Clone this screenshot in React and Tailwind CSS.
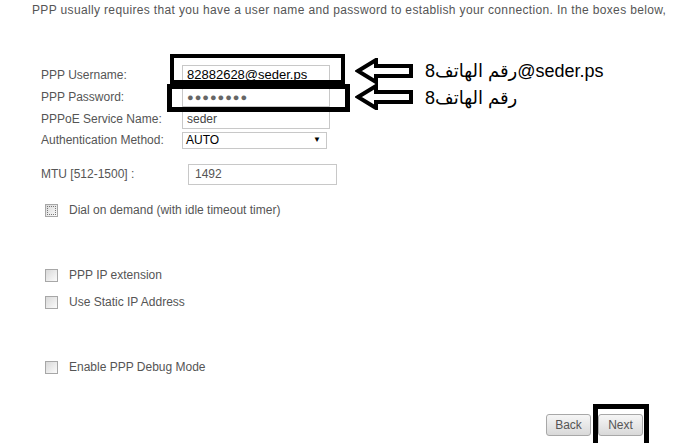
import React from 'react';

function Check({ label, focus }) {
  return (
    <div className="flex items-center h-[16px]">
      <span className={`w-[13px] h-[13px] border border-[#a7a7a7] bg-gradient-to-br from-[#d9d9d9] to-[#fbfbfb] ${focus ? 'outline outline-1 outline-dotted outline-[#777] outline-offset-[-3px]' : ''}`}></span>
      <span className="ml-[11px] text-[12px] text-[#555]">{label}</span>
    </div>
  );
}

function Arrow({ top }) {
  return (
    <svg className="absolute left-[355px]" style={{ top }} width="60" height="26" viewBox="0 0 60 26">
      <polygon points="3,13 21,2 21,8 56,8 56,18 21,18 21,24" fill="white" stroke="black" strokeWidth="4" strokeLinejoin="miter" />
    </svg>
  );
}

export default function App() {
  return (
    <div className="relative w-[684px] h-[443px] bg-white overflow-hidden text-[#555]" style={{ fontFamily: '"Liberation Sans", Arial, sans-serif' }}>
      <div className="pl-[32px] pt-[1px] text-[12px] whitespace-nowrap tracking-[0.35px]">
        PPP usually requires that you have a user name and password to establish your connection. In the boxes below,
      </div>

      <div className="pl-[41px] pt-[45px] text-[12px]">
        <div className="flex items-center h-[22px]">
          <span className="w-[141px]">PPP Username:</span>
          <div className="w-[148px] h-[21px] border border-[#c8c8c8] px-[4px] flex items-center text-[13px] text-black">82882628@seder.ps</div>
        </div>
        <div className="flex items-center h-[22px]">
          <span className="w-[141px]">PPP Password:</span>
          <div className="w-[148px] h-[20px] border border-[#c8c8c8] px-[4px] flex items-center text-[11px] tracking-[1px] text-[#666]">●●●●●●●●</div>
        </div>
        <div className="flex items-center h-[22px]">
          <span className="w-[141px]">PPPoE Service Name:</span>
          <div className="w-[148px] h-[19px] border border-[#c8c8c8] px-[4px] flex items-center text-[12px] text-[#444]">seder</div>
        </div>
        <div className="flex items-center h-[20px]">
          <span className="w-[141px]">Authentication Method:</span>
          <div className="w-[145px] h-[17px] border border-[#c8c8c8] pl-[3px] pr-[5px] flex items-center justify-between text-[12px] text-black">
            <span>AUTO</span>
            <span className="text-[8px]">▼</span>
          </div>
        </div>

        <div className="flex items-center h-[22px] mt-[13px]">
          <span className="w-[147px]">MTU [512-1500] :</span>
          <div className="w-[149px] h-[21px] border border-[#c8c8c8] px-[6px] flex items-center text-[12px] text-[#555]">1492</div>
        </div>

        <div className="ml-[4px] mt-[17px]">
          <Check label="Dial on demand (with idle timeout timer)" focus />
          <div className="h-[49px]"></div>
          <Check label="PPP IP extension" />
          <div className="h-[11px]"></div>
          <Check label="Use Static IP Address" />
          <div className="h-[49px]"></div>
          <Check label="Enable PPP Debug Mode" />
        </div>
      </div>

      <div className="absolute left-[546px] top-[414px] flex gap-[7px]">
        <button className="w-[45px] h-[22px] border border-[#a8a8a8] rounded-[3px] bg-gradient-to-b from-[#f6f6f6] to-[#d9d9d9] text-[12px] text-[#555]">Back</button>
        <button className="w-[45px] h-[22px] border border-[#a8a8a8] rounded-[3px] bg-gradient-to-b from-[#f6f6f6] to-[#d9d9d9] text-[12px] text-[#555]">Next</button>
      </div>

      {/* annotations drawn over the form */}
      <div className="absolute left-[170px] top-[54px] w-[175px] h-[30px] border-[4px] border-black"></div>
      <div className="absolute left-[167px] top-[84px] w-[183px] h-[28px] border-[5px] border-black"></div>
      <div className="absolute left-[593px] top-[404px] w-[56px] h-[45px] border-[5px] border-black"></div>
      <Arrow top={58} />
      <Arrow top={84} />
      <div className="absolute left-[425px] top-[59px] text-[18px] leading-[24px] text-black whitespace-nowrap" dir="ltr" style={{ fontFamily: '"Liberation Sans", "DejaVu Sans", sans-serif' }}>8رقم الهاتف@seder.ps</div>
      <div className="absolute left-[425px] top-[86px] text-[18px] leading-[24px] text-black whitespace-nowrap" dir="ltr" style={{ fontFamily: '"Liberation Sans", "DejaVu Sans", sans-serif' }}>8رقم الهاتف</div>
    </div>
  );
}
